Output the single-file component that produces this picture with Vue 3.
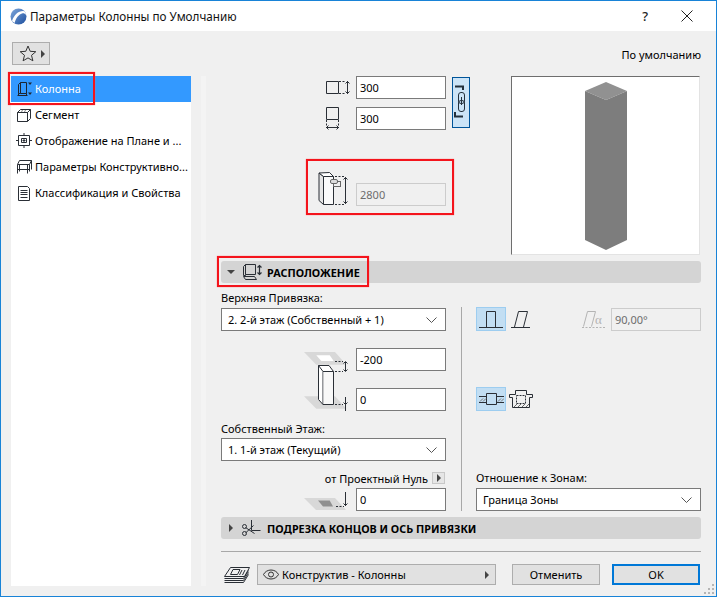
<template>
  <div class="window">
    <header class="titlebar">
      <svg class="logo" width="17" height="17" viewBox="0 0 17 17"><defs><linearGradient id="lg" x1="0" y1="0" x2="1" y2="1"><stop offset="0" stop-color="#7fa8dc"/><stop offset="1" stop-color="#1d4f9e"/></linearGradient></defs><circle cx="8.5" cy="8.5" r="8" fill="url(#lg)"/><path d="M2 13C4 7 8 3 13 3c2 0 3 2 3 4-1-1.500-2.500-2-4-1.500C8.500 6.500 6 10 4.500 15Z" fill="#fff"/></svg>
      <span class="title">Параметры Колонны по Умолчанию</span>
      <span class="help">?</span>
      <svg class="close" width="12" height="12" viewBox="0 0 12 12"><path d="M.5.500l11 11M11.500.500l-11 11" stroke="#222" fill="none"/></svg>
    </header>

    <div class="toolbar">
      <button class="star">
        <svg width="18" height="17" viewBox="0 0 18 17"><path d="M9 1l2.200 5.300 5.600.4-4.300 3.600 1.400 5.500L9 12.900 4.100 15.800l1.400-5.500L1.200 6.700l5.600-.4Z" fill="none" stroke="#333"/></svg>
        <i class="tri-right"></i>
      </button>
      <span class="default">По умолчанию</span>
    </div>

    <div class="main">
      <nav class="sidebar">
        <div class="nav active">
          <svg width="18" height="18" viewBox="0 0 18 18" fill="none" stroke="#1c2530"><path d="M4.500 2.500h6v11h-6zM2.500 4.500l2-2M2.500 4.500v9h2M1.500 15.500h10M2.500 13.500v2M10.500 13.500v2"/><path d="M12 2.500h4l-2 2.500zM12 12.500h4l-2 2.500z" fill="#1c2530" stroke="none"/></svg>
          <span>Колонна</span>
        </div>
        <div class="nav">
          <svg width="18" height="18" viewBox="0 0 18 18" fill="none" stroke="#2a2f36"><path d="M1.500 6.500l3-3h10l-3 3zM1.500 6.500h10v9h-10zM11.500 15.500l3-3v-9"/><path d="M5 5.500l2-1M8 5.500l2-1" stroke="#888"/></svg>
          <span>Сегмент</span>
        </div>
        <div class="nav">
          <svg width="18" height="18" viewBox="0 0 18 18" fill="none" stroke="#2a2f36"><path d="M2.500 3.500h11v10h-11zM8 1v2.500M8 13.500V16M0 8.500h2.500M13.500 8.500H16M5.500 6.500h5v4h-5z"/><path d="M8 7v3M6.500 8.500h3"/></svg>
          <span>Отображение на Плане и ...</span>
        </div>
        <div class="nav">
          <svg width="18" height="18" viewBox="0 0 18 18" fill="none" stroke="#2a2f36"><path d="M1.500 6.500l2-4h12l-2 4zM1.500 6.500v9M3.500 6.500v7M11.500 6.500v9M13.500 6.500v7M15.500 2.500v9M1.500 11.500h12"/></svg>
          <span>Параметры Конструктивно...</span>
        </div>
        <div class="nav">
          <svg width="18" height="18" viewBox="0 0 18 18" fill="none" stroke="#2a2f36"><path d="M2.500 2.500h9l2 2v12h-11z"/><path d="M4.500 6.500h7M4.500 8.500h7M4.500 10.500h7M4.500 13.500h7"/></svg>
          <span>Классификация и Свойства</span>
        </div>
      </nav>
      <div class="strip"></div>

      <section class="content">
        <div class="top">
          <div class="dims">
            <div class="dim-block">
              <div class="dim-rows">
                <div class="dim-row">
                  <svg width="26" height="18" viewBox="0 0 26 18" fill="none" stroke="#2a2f36"><path d="M1.500 2.500h12v12h-12z"/><path d="M14 2.500h7M14 14.500h7" stroke-dasharray="2 1.500"/><path d="M22.500 2v13M20.500 4.500l2-2 2 2M20.500 12.500l2 2 2-2"/></svg>
                  <input class="field" value="300" readonly>
                </div>
                <div class="dim-row">
                  <svg width="26" height="24" viewBox="0 0 26 24" fill="none" stroke="#2a2f36"><path d="M1.500 1.500h12v12h-12z"/><path d="M1.500 14v7M13.500 14v7" stroke-dasharray="2 1.500"/><path d="M1 21.500h13M3.500 19.500l-2 2 2 2M11.500 19.500l2 2-2 2"/></svg>
                  <input class="field" value="300" readonly>
                </div>
              </div>
              <div class="link">
                <svg width="16" height="49" viewBox="0 0 16 49" fill="none" stroke="#23303c"><path d="M2 8.500h8V12M2 34v4.500h8" stroke-width="2"/><rect x="5.500" y="14.500" width="6" height="11" rx="2.500"/><rect x="5.500" y="22.500" width="6" height="11" rx="2.500"/><path d="M8.500 19v8"/></svg>
              </div>
            </div>
            <div class="height-row">
              <svg width="32" height="35" viewBox="0 0 32 35" fill="none" stroke="#2a2f36"><path d="M1 2l4.500 3.500v28L1 29.500z" fill="#e6e6e6"/><path d="M1 2l10.500-.5 4 4h-10z" fill="#fff"/><path d="M5.500 5.500h10v28h-10z" fill="#fafafa"/><path d="M17 5.500h9M17 33.500h9" stroke-dasharray="2 1.500"/><path d="M27.500 6v27M25.500 8.500l2-2 2 2M25.500 30.500l2 2 2-2"/><rect x="15.500" y="10.500" width="7" height="5" stroke="#666"/><rect x="12.500" y="8.500" width="7" height="4" rx="1.500" stroke="#666" fill="#ddd"/></svg>
              <input class="field disabled" value="2800" readonly>
            </div>
          </div>
          <div class="preview">
            <svg width="42" height="168" viewBox="0 0 42 168"><path d="M0 9L21 0l21 9-21 9Z" fill="#919191"/><path d="M0 9l21 9 21-9v149l-21 10-21-10Z" fill="#7d7d7d"/></svg>
          </div>
        </div>

        <div class="section">
          <i class="tri-down"></i>
          <svg width="20" height="18" viewBox="0 0 20 18" fill="none" stroke="#2a2f36"><path d="M3.500 1.500h10v10h-10zM1.500 3.500l2-2M1.500 3.500v9h2M3.500 11.500v1"/><path d="M1.500 13.500h11l2 3h-11z"/><path d="M17.500 2v10M15.500 4.500l2-2 2 2M15.500 9.500l2 2 2-2" stroke-width="1.200"/></svg>
          <b>РАСПОЛОЖЕНИЕ</b>
        </div>

        <div class="placement">
          <div class="col-left">
            <label class="cap first">Верхняя Привязка:</label>
            <div class="select">
              <span>2. 2-й этаж (Собственный + 1)</span>
              <svg width="11" height="6" viewBox="0 0 11 6"><path d="M.5.500l5 5 5-5" fill="none" stroke="#555"/></svg>
            </div>
            <div class="offsets">
              <svg width="46" height="59" viewBox="0 0 46 62" preserveAspectRatio="xMidYMin slice" fill="none" stroke="#2a2f36"><path d="M0 0h31l11.300 12.700h-30z" fill="#d8d8d8" stroke="none"/><path d="M12.300 3.300h13.400l4 5.700H17.300z" fill="#fff" stroke="none"/><path d="M0 44.300h31l11.300 12.400h-30z" fill="#d8d8d8" stroke="none"/><path d="M14.500 13.500h10.500l4.500 6v33h-10.500l-4.500-5z" fill="#fff"/><path d="M14.500 13.500l4.500 6h10.500M19 19.500v33"/><path d="M19.500 20h9.500v32h-9.500z" fill="#f8f8f8" stroke="none"/><path d="M31 9.500h8M31 19.500h8M31 52.500h8" stroke-dasharray="2 1.500"/><path d="M41.500 10v9M39.500 11.500l2-2 2 2M39.500 17.500l2 2 2-2M41.500 45v14M39.500 50.500l2 2 2-2"/></svg>
              <div class="offset-fields">
                <input class="field" value="-200" readonly>
                <input class="field" value="0" readonly>
              </div>
            </div>
            <label class="cap second">Собственный Этаж:</label>
            <div class="select">
              <span>1. 1-й этаж (Текущий)</span>
              <svg width="11" height="6" viewBox="0 0 11 6"><path d="M.5.500l5 5 5-5" fill="none" stroke="#555"/></svg>
            </div>
            <div class="from-zero">
              <span>от Проектный Нуль</span>
              <button class="mini"><i class="tri-right"></i></button>
            </div>
            <div class="zero-row">
              <svg width="46" height="19" viewBox="0 0 46 19" fill="none"><path d="M0 6h31l11 12H12z" fill="#d8d8d8"/><path d="M14 8.500h11.700l3.300 6H19z" fill="#8f8f8f"/><path d="M32 14.500h8" stroke="#2a2f36" stroke-dasharray="2 1.500"/><path d="M41.500 0v14M39.500 11.500l2 2 2-2" stroke="#2a2f36"/></svg>
              <input class="field" value="0" readonly>
            </div>
          </div>

          <div class="vline"></div>

          <div class="col-right">
            <div class="tool-row first">
              <div class="tool on">
                <svg width="26" height="20" viewBox="0 0 26 20" fill="none" stroke="#2a2f36"><path d="M8.500 18V2.500h9V18M1 18.500h24"/></svg>
              </div>
              <svg class="slant" width="20" height="18" viewBox="0 0 20 18" fill="none" stroke="#2a2f36"><path d="M3.500 17l4-15.500h9L12.500 17M0 17.500h19"/></svg>
              <svg class="angle" width="24" height="18" viewBox="0 0 24 18" fill="none" stroke="#b4b4b4"><path d="M1.500 16.500l4-15h8l-4 15"/><path d="M0 17.500h24" stroke-dasharray="2 1.500"/><text x="13" y="14" font-size="13" fill="#b4b4b4" stroke="none" font-family="Liberation Serif">α</text></svg>
              <input class="field disabled" value="90,00°" readonly>
            </div>
            <div class="tool-row second">
              <div class="tool on">
                <svg width="26" height="16" viewBox="0 0 26 16" fill="none" stroke="#2a2f36"><path d="M8.500 2.500h10v11h-10z"/><path d="M1 5.500h7M19 5.500h7M1 11.500h7M19 11.500h7"/><path d="M2 10.500l3-3M5 10.500l3-3M20 10.500l3-3M23 10.500l3-3" stroke="#777"/></svg>
              </div>
              <svg class="core" width="24" height="20" viewBox="0 0 24 20" fill="none" stroke="#2a2f36"><path d="M6.500 1.500h11v4h6v3h-3v10H3.500v-10H.5v-3h6z"/><path d="M7.500 6.500h9v8h-9z" fill="#f0f0f0" stroke-dasharray="2 1"/><path d="M5 18l3-3M9 18l3-3M13 18l3-3M17 18l3-3" stroke="#666"/></svg>
            </div>
            <label class="cap zones">Отношение к Зонам:</label>
            <div class="select">
              <span>Граница Зоны</span>
              <svg width="11" height="6" viewBox="0 0 11 6"><path d="M.5.500l5 5 5-5" fill="none" stroke="#555"/></svg>
            </div>
          </div>
        </div>

        <div class="section collapsed">
          <i class="tri-right"></i>
          <svg width="20" height="18" viewBox="0 0 20 18" fill="none" stroke="#2a2f36"><path d="M9.500 1v10.500h9M3.500 8.500l9 6M3.500 14l8-7.500"/><circle cx="2.500" cy="7.500" r="2"/><circle cx="2.500" cy="14.500" r="2"/></svg>
          <b>ПОДРЕЗКА КОНЦОВ И ОСЬ ПРИВЯЗКИ</b>
        </div>

        <div class="hline"></div>

        <footer class="footer">
          <svg class="stack" width="27" height="18" viewBox="0 0 27 18" fill="none" stroke="#2a2f36"><path d="M7.500 1.500h19l-5 9h-20zM1.500 12.500h19l5-8M1.500 14.500h19l5-8M1.500 16.500h19l5-8"/><path d="M10 3.500h7l-2.500 5h-7zM19 4l-2.500 5M22 4l-2.500 5"/></svg>
          <div class="layer">
            <svg width="16" height="11" viewBox="0 0 16 11" fill="none" stroke="#333"><path d="M.5 5.500c3-6 12-6 15 0-3 6-12 6-15 0z"/><circle cx="8" cy="5.500" r="2.500"/></svg>
            <span>Конструктив - Колонны</span>
            <i class="tri-right"></i>
          </div>
          <button class="btn">Отменить</button>
          <button class="btn ok">OK</button>
        </footer>
      </section>
    </div>

    <svg class="grip" width="12" height="12" viewBox="0 0 12 12" fill="#b5b5b5"><rect x="8" y="0" width="2" height="2"/><rect x="4" y="4" width="2" height="2"/><rect x="8" y="4" width="2" height="2"/><rect x="0" y="8" width="2" height="2"/><rect x="4" y="8" width="2" height="2"/><rect x="8" y="8" width="2" height="2"/></svg>

    <div class="mark m1"></div>
    <div class="mark m2"></div>
    <div class="mark m3"></div>
  </div>
</template>

<script setup>
</script>

<style>
html, body { margin: 0; padding: 0; background: #f0f0f0; }
</style>

<style scoped>
* { box-sizing: border-box; }
.window {
  position: relative;
  width: 717px;
  height: 597px;
  background: #f0f0f0;
  border: 1px solid #1883d7;
  font-family: "Noto Sans", "Open Sans", sans-serif;
  font-size: 11px;
  color: #000;
  overflow: hidden;
}
.titlebar {
  height: 30px;
  background: #fff;
  display: flex;
  align-items: center;
  padding-left: 9px;
}
.logo { flex: none; }
.title { margin-left: 3px; font-size: 11.7px; color: #111; flex: 1; }
.help { font-size: 13px; font-weight: 500; margin-right: 33px; color: #222; }
.close { margin-right: 23px; }
.toolbar {
  height: 45px;
  display: flex;
  justify-content: space-between;
  padding: 11px 15px 0 11px;
}
.star {
  width: 38px;
  height: 23px;
  padding: 0 4px 0 6px;
  background: #e1e1e1;
  border: 1px solid #adadad;
  display: flex;
  align-items: center;
  justify-content: space-between;
}
.tri-right {
  display: block;
  width: 0;
  height: 0;
  border-left: 4px solid #444;
  border-top: 4px solid transparent;
  border-bottom: 4px solid transparent;
}
.tri-down {
  display: block;
  width: 0;
  height: 0;
  border-top: 4px solid #444;
  border-left: 4px solid transparent;
  border-right: 4px solid transparent;
}
.default { margin-top: 1px; line-height: 24px; }
.main { display: flex; padding-left: 10px; height: 520px; }
.sidebar { width: 180px; height: 510px; background: #fff; }
.nav {
  height: 26px;
  display: flex;
  align-items: center;
  gap: 1px;
  padding-left: 5px;
  white-space: nowrap;
}
.nav svg { flex: none; }
.nav span { padding-bottom: 2px; }
.nav.active { background: #3399ff; color: #fff; }
.strip { width: 5px; height: 510px; margin-left: 10px; background: #f4f4f4; }
.content { width: 480px; margin-left: 15px; }
.top { height: 185px; display: flex; }
.dims { width: 290px; padding-left: 97px; }
.dim-block { display: flex; }
.dim-rows { display: flex; flex-direction: column; gap: 7px; }
.dim-row { display: flex; align-items: center; justify-content: space-between; width: 128px; padding-left: 7px; }
.field {
  display: block;
  width: 90px;
  height: 23px;
  flex: none;
  border: 1px solid #7a7a7a;
  background: #fff;
  font: inherit;
  color: #000;
  padding: 0 3px;
  outline: none;
}
.field.disabled { background: #f0f0f0; border-color: #ccc; color: #6d6d6d; }
.link {
  width: 18px;
  height: 51px;
  margin: 1px 0 0 6px;
  background: #cce4f7;
  border: 1px solid #005499;
  display: flex;
  align-items: center;
  justify-content: center;
}
.height-row { display: flex; align-items: flex-end; justify-content: space-between; width: 128px; margin-top: 41px; }
.preview {
  width: 189px;
  height: 179px;
  background: #fff;
  border: 1px solid #e3e3e3;
  border-top: 1px solid #6e6e6e;
  border-left: 1px solid #6e6e6e;
  padding: 5px 0 0 73px;
}
.preview svg { display: block; }
.section {
  height: 22px;
  background: #d4d4d4;
  border-radius: 3px;
  display: flex;
  align-items: center;
  padding-left: 6px;
  gap: 5px;
}
.section svg { margin-left: 2px; }
.section b { font-weight: 700; font-size: 10.8px; }
.section.collapsed { padding-left: 8px; }
.section.collapsed svg { margin-left: 4px; }
.placement { height: 234px; display: flex; }
.col-left, .col-right { width: 225px; }
.cap { display: block; line-height: 16px; }
.cap.first { margin-top: 7px; margin-bottom: 2px; }
.cap.second { margin-top: 10px; margin-bottom: 1px; }
.cap.zones { margin-top: 59px; margin-bottom: 2px; }
.select {
  height: 23px;
  background: #fff;
  border: 1px solid #7a7a7a;
  display: flex;
  align-items: center;
  justify-content: space-between;
  padding: 0 8px 0 6px;
}
.offsets { display: flex; justify-content: flex-end; align-items: flex-start; margin-top: 17px; gap: 6px; height: 63px; }
.offsets svg { margin-top: 4px; }
.offset-fields { display: flex; flex-direction: column; gap: 17px; }
.from-zero { display: flex; justify-content: flex-end; align-items: center; height: 14px; margin-top: 10px; gap: 4px; padding-right: 1px; }
.mini {
  width: 13px;
  height: 12px;
  padding: 0;
  border: 1px solid #c8c8c8;
  background: #e6e6e6;
  display: flex;
  align-items: center;
  justify-content: center;
}
.zero-row { display: flex; justify-content: flex-end; align-items: flex-end; gap: 6px; margin-top: 3px; }
.vline { width: 1px; height: 204px; margin: 24px 14px 0 15px; background: #a8a8a8; }
.tool-row { display: flex; align-items: center; }
.tool-row.first { margin-top: 24px; height: 24px; }
.tool-row.second { margin-top: 56px; height: 24px; }
.tool {
  width: 30px;
  height: 24px;
  background: #c2def3;
  border: 1px solid #9dcdf0;
  display: flex;
  align-items: center;
  justify-content: center;
}
.slant { margin-left: 5px; }
.angle { margin-left: 51px; margin-right: 5px; }
.core { margin-left: 3px; }
.hline { height: 1px; background: #a8a8a8; margin-top: 12px; }
.footer { display: flex; align-items: center; height: 21px; margin-top: 12px; }
.stack { margin-left: 2px; }
.layer {
  width: 239px;
  height: 21px;
  margin-left: 7px;
  background: #e1e1e1;
  border: 1px solid #adadad;
  display: flex;
  align-items: center;
  padding: 0 6px 0 5px;
  gap: 3px;
}
.layer span { flex: 1; }
.btn {
  width: 88px;
  height: 21px;
  margin-left: 16px;
  padding: 0;
  background: #e1e1e1;
  border: 1px solid #adadad;
  font: inherit;
  color: #000;
}
.btn.ok { margin-left: 12px; border: 2px solid #0078d7; }
.grip { position: absolute; right: 0; bottom: 0; }
.mark { position: absolute; border: 2px solid #f4141c; box-shadow: 0 0 1px #ff6a6a; }
.m1 { left: 7px; top: 71px; width: 87px; height: 33px; }
.m2 { left: 305px; top: 158px; width: 148px; height: 56px; }
.m3 { left: 216px; top: 255px; width: 152px; height: 31px; }
</style>
